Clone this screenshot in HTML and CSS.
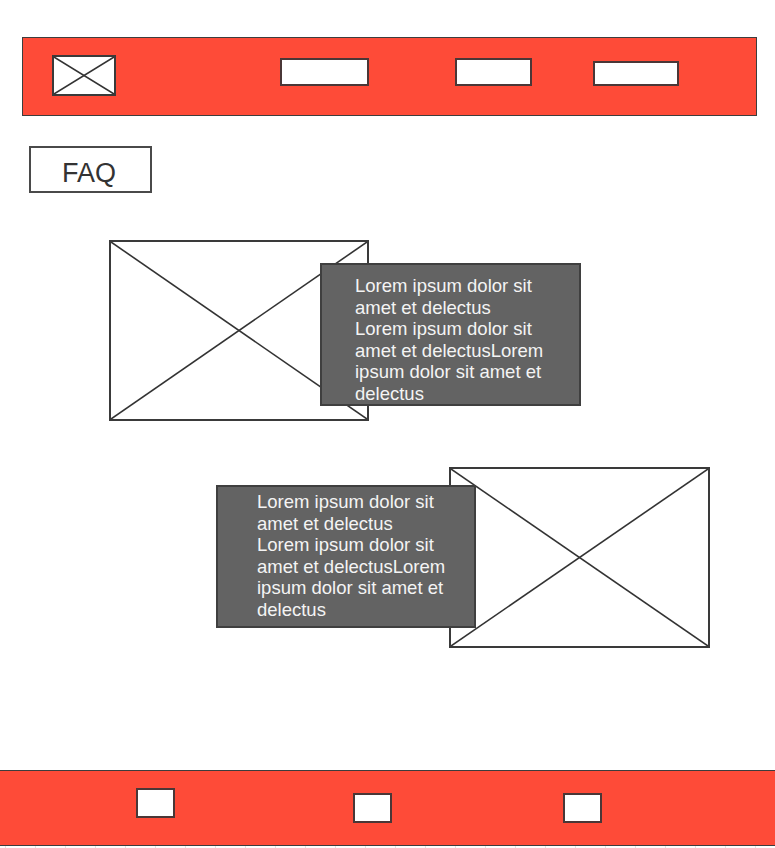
FILE: index.html
```html
<!DOCTYPE html>
<html lang="en">
<head>
    <meta charset="UTF-8">
    <meta name="viewport" content="width=device-width, initial-scale=1.0">
    <title>FAQ</title>
    <link rel="stylesheet" href="styles.css">
</head>
<body>
    <div class="header">
        <div class="logo">
            <svg viewBox="0 0 100 100" preserveAspectRatio="none">
                <line x1="0" y1="0" x2="100" y2="100" vector-effect="non-scaling-stroke"/>
                <line x1="100" y1="0" x2="0" y2="100" vector-effect="non-scaling-stroke"/>
            </svg>
        </div>
        <div class="nav-item nav-one"></div>
        <div class="nav-item nav-two"></div>
        <div class="nav-item nav-three"></div>
    </div>

    <div class="faq-title">FAQ</div>

    <!-- First feature: picture left, text right -->
    <div class="feature feature-left">
        <div class="placeholder">
            <svg viewBox="0 0 100 100" preserveAspectRatio="none">
                <line x1="0" y1="0" x2="100" y2="100" vector-effect="non-scaling-stroke"/>
                <line x1="100" y1="0" x2="0" y2="100" vector-effect="non-scaling-stroke"/>
            </svg>
        </div>
        <div class="text-box text-box-one">
            Lorem ipsum dolor sit amet et delectus<br>
            Lorem ipsum dolor sit amet et delectusLorem ipsum dolor sit amet et delectus
        </div>
    </div>

    <!-- Second feature: text left, picture right -->
    <div class="feature feature-right">
        <div class="text-box text-box-two">
            Lorem ipsum dolor sit amet et delectus<br>
            Lorem ipsum dolor sit amet et delectusLorem ipsum dolor sit amet et delectus
        </div>
        <div class="placeholder">
            <svg viewBox="0 0 100 100" preserveAspectRatio="none">
                <line x1="0" y1="0" x2="100" y2="100" vector-effect="non-scaling-stroke"/>
                <line x1="100" y1="0" x2="0" y2="100" vector-effect="non-scaling-stroke"/>
            </svg>
        </div>
    </div>

    <div class="footer">
        <div class="footer-item footer-one"></div>
        <div class="footer-item footer-two"></div>
        <div class="footer-item footer-three"></div>
    </div>
    <div class="grid-strip"></div>
</body>
</html>
```

FILE: styles.css
```css
* {
    margin: 0;
    padding: 0;
    box-sizing: border-box;
    font-family: 'Liberation Sans', Arial, sans-serif;
}

body {
    background-color: #ffffff;
    color: #333333;
    width: 775px;
    overflow: hidden;
}

svg {
    display: block;
    width: 100%;
    height: 100%;
}

svg line {
    stroke: #333333;
    stroke-width: 1.6;
}

/* Top bar */
.header {
    margin: 37px 0 0 22px;
    width: 735px;
    height: 79px;
    background-color: #fe4b38;
    border: 1px solid #3d3d3d;
    display: flex;
    align-items: flex-start;
    padding-left: 29px;
}

.logo {
    width: 64px;
    height: 41px;
    margin-top: 17px;
    background-color: #ffffff;
    border: 2px solid #3a3a3a;
}

.nav-item {
    background-color: #ffffff;
    border: 2px solid #4a3737;
}

.nav-one {
    width: 89px;
    height: 28px;
    margin: 20px 0 0 164px;
}

.nav-two {
    width: 77px;
    height: 28px;
    margin: 20px 0 0 86px;
}

.nav-three {
    width: 86px;
    height: 25px;
    margin: 23px 0 0 61px;
}

/* Page title */
.faq-title {
    margin: 30px 0 0 29px;
    width: 123px;
    height: 47px;
    border: 2px solid #4a4a4a;
    display: flex;
    justify-content: center;
    align-items: center;
    padding-top: 7px;
    padding-right: 3px;
    font-size: 27px;
    color: #333333;
}

/* Feature rows */
.feature {
    display: flex;
    align-items: flex-start;
}

.feature-left {
    margin-top: 47px;
    padding-left: 109px;
}

.feature-right {
    margin-top: 46px;
    padding-left: 216px;
}

.placeholder {
    width: 261px;
    height: 181px;
    background-color: #ffffff;
    border: 2px solid #3a3a3a;
    flex-shrink: 0;
}

.feature-left .placeholder {
    width: 260px;
}

.feature-right .placeholder {
    margin-left: -27px;
}

.text-box {
    position: relative;
    z-index: 1;
    flex-shrink: 0;
    height: 143px;
    background-color: #636363;
    border: 2px solid #3f3f3f;
    color: #f4f4f4;
    font-size: 18.5px;
    line-height: 21.6px;
    overflow: visible;
}

.text-box-one {
    width: 261px;
    margin: 23px 0 0 -49px;
    padding: 10px 18px 0 33px;
}

.text-box-two {
    width: 260px;
    margin-top: 18px;
    padding: 4px 16px 0 39px;
}

/* Bottom bar */
.footer {
    margin-top: 122px;
    height: 76px;
    background-color: #fe4b38;
    border-top: 1px solid #3d3d3d;
    border-bottom: 1px solid #3d3d3d;
    display: flex;
    align-items: flex-start;
    padding-left: 136px;
}

.footer-item {
    background-color: #ffffff;
    border: 2px solid #4a3737;
    height: 30px;
}

.footer-one {
    width: 39px;
    margin-top: 17px;
}

.footer-two {
    width: 39px;
    margin: 22px 0 0 178px;
}

.footer-three {
    width: 39px;
    margin: 22px 0 0 171px;
}

.grid-strip {
    height: 3px;
    background-image: repeating-linear-gradient(90deg, transparent 0, transparent 5px, #e2e2e2 5px, #e2e2e2 6px, transparent 6px, transparent 30px);
}
```
